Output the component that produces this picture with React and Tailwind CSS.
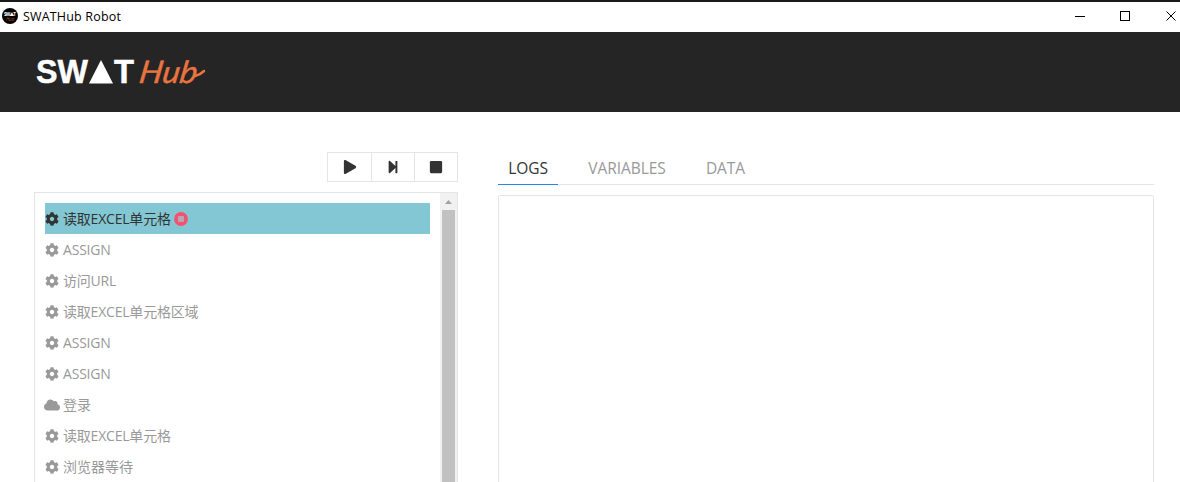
import { FaCog, FaCloud, FaPlay, FaStepForward, FaStop } from "react-icons/fa";

const steps = [
  { label: "读取EXCEL单元格", active: true },
  { label: "ASSIGN" },
  { label: "访问URL" },
  { label: "读取EXCEL单元格区域" },
  { label: "ASSIGN" },
  { label: "ASSIGN" },
  { label: "登录", cloud: true },
  { label: "读取EXCEL单元格" },
  { label: "浏览器等待" },
];

function Breakpoint() {
  return (
    <svg className="ml-[3px] size-3.5" viewBox="0 0 14 14">
      <circle cx="7" cy="7" r="6.9" fill="#f9506e" />
      <rect x="4" y="4" width="6" height="6" rx="1" fill="#b4a8b8" />
    </svg>
  );
}

function Step({ step }) {
  const Icon = step.cloud ? FaCloud : FaCog;
  const latin = /[A-Z]/.test(step.label);
  return (
    <li className={step.active ? "flex h-[31px] items-center bg-[#82c7d3] text-[#333]" : "flex h-[31px] items-center text-[#999]"}>
      <span className="-ml-px flex w-4 shrink-0 justify-center">
        <Icon className={step.cloud ? "h-3.5 w-4" : "size-3.5"} />
      </span>
      <span className={latin ? "ml-[3px] whitespace-nowrap text-[14px] leading-5 tracking-[-0.2px]" : "ml-[3px] whitespace-nowrap text-[14px] leading-5"}>{step.label}</span>
      {step.active && <Breakpoint />}
    </li>
  );
}

function TitleBar() {
  return (
    <div className="flex h-8 items-center border-t-2 border-[#1b191a] bg-white text-black">
      <svg className="mb-0.5 ml-0.5 size-4" viewBox="0 0 16 16">
        <circle cx="8" cy="8" r="8" fill="#000" />
        <text x="2" y="8" fontSize="4.6" fontWeight="700" fill="#fff" textLength="12">SW▲T</text>
        <text x="4" y="12.5" fontSize="4.5" fontStyle="italic" fill="#b5532c">Hub</text>
      </svg>
      <span className="ml-[5px] text-[12.5px] leading-4 tracking-[0.17px]">SWATHub Robot</span>
      <svg className="mb-0.5 ml-auto h-3 w-[106px]" viewBox="0 0 106 12" fill="none" stroke="#000" shapeRendering="crispEdges">
        <path d="M1 6.5h10M46.5 1.500h9v9h-9z" />
        <path d="M92.5 1.500l9 9M101.500 1.500l-9 9" shapeRendering="auto" />
      </svg>
    </div>
  );
}

function Logo() {
  return (
    <svg className="ml-[34px] h-10 w-44" viewBox="0 0 176 40">
      <g fill="#fff" stroke="#fff" strokeWidth="0.5" fontFamily="Liberation Sans, sans-serif" fontWeight="700" fontSize="33">
        <text x="2" y="31" textLength="52" lengthAdjust="spacingAndGlyphs">SW</text>
        <text x="80" y="31" textLength="20" lengthAdjust="spacingAndGlyphs">T</text>
      </g>
      <path d="M67 8l12 23.500H55z" fill="#fff" />
      <g transform="translate(104 31) skewX(-9)">
        <text x="0" y="0" fill="#e8743f" stroke="#e8743f" strokeWidth="0.4" strokeLinejoin="round" fontFamily="Lato, sans-serif" fontWeight="400" fontStyle="italic" fontSize="31" textLength="58" lengthAdjust="spacingAndGlyphs">Hub</text>
      </g>
      <path d="M161 24q5-1 9-5" fill="none" stroke="#e8743f" strokeWidth="2.500" strokeLinecap="round" />
    </svg>
  );
}

export default function App() {
  return (
    <div className="flex h-[482px] w-[1180px] flex-col overflow-hidden bg-white font-['Open_Sans','Noto_Sans_CJK_SC',sans-serif]">
      <TitleBar />
      <header className="flex h-20 shrink-0 items-center bg-[#252525]">
        <Logo />
      </header>
      <main className="flex flex-1 gap-10 overflow-hidden pr-[26px] pl-[34px] pt-10">
        <section className="flex w-[424px] flex-col">
          <div className="mb-2.5 flex h-[30px] w-[131px] shrink-0 self-end divide-x divide-[#e5e5e5] border border-[#e5e5e5] text-[#333]">
            <button className="flex w-11 items-center justify-center"><FaPlay className="size-3.5" /></button>
            <button className="flex w-[43px] items-center justify-center"><FaStepForward className="size-3.5" /></button>
            <button className="flex flex-1 items-center justify-center"><FaStop className="size-3.5" /></button>
          </div>
          <div className="flex h-[400px] shrink-0 border border-[#e5e5e5]">
            <ul className="flex-1 p-2.5">
              {steps.map((step, i) => <Step key={i} step={step} />)}
            </ul>
            <div className="flex w-[17px] flex-col items-center bg-[#f1f1f1]">
              <svg className="h-[17px] w-[17px]" viewBox="0 0 17 17"><path d="M5 11h7L8.500 7z" fill="#a3a3a3" /></svg>
              <div className="w-[13px] flex-1 bg-[#c1c1c1]" />
            </div>
          </div>
        </section>
        <section className="flex flex-1 flex-col">
          <nav className="mb-2.5 flex h-[33px] shrink-0 gap-5 border-b border-[#e5e5e5] text-[15.5px] tracking-[-0.05px] text-[#999]">
            <span className="flex h-[33px] w-[60px] items-center justify-center border-b border-[#1e87f0] pt-0.5 text-[#333]">LOGS</span>
            <span className="flex w-[98px] items-center justify-center pt-0.5">VARIABLES</span>
            <span className="flex w-[59px] items-center justify-center pt-0.5">DATA</span>
          </nav>
          <div className="h-[400px] shrink-0 rounded-[2px] border border-[#e5e5e5]" />
        </section>
      </main>
    </div>
  );
}
